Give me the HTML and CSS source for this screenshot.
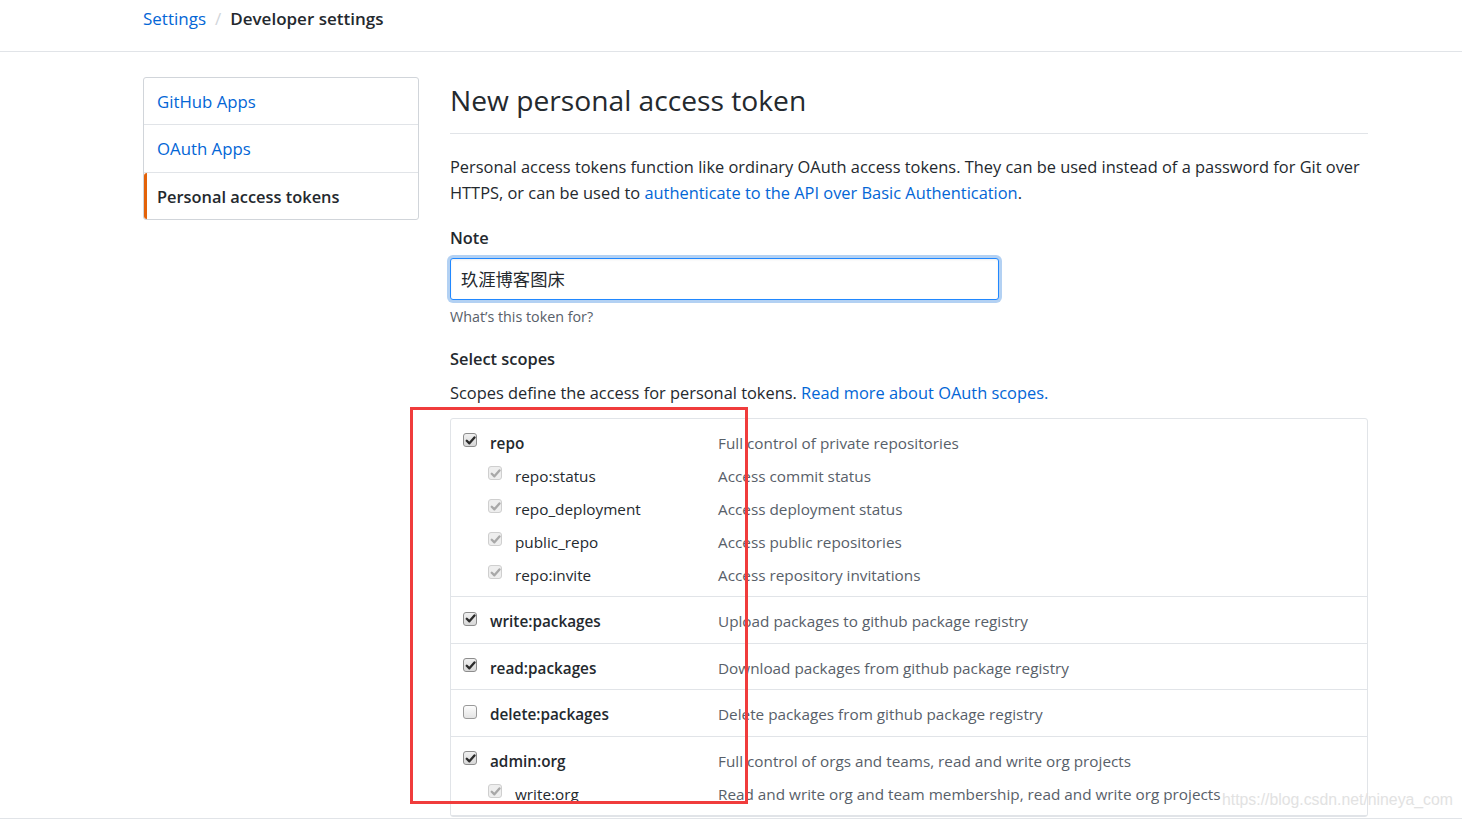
FILE: index.html
```html
<!DOCTYPE html>
<html lang="en">
<head>
<meta charset="utf-8">
<title>New personal access token</title>
<link rel="stylesheet" href="styles.css">
</head>
<body>
<div class="viewport">
  <header class="topbar">
    <div class="container">
      <nav class="crumbs">
        <a href="#" class="crumb-link">Settings</a>
        <span class="crumb-sep">/</span>
        <strong class="crumb-current">Developer settings</strong>
      </nav>
    </div>
  </header>

  <div class="container layout">
    <nav class="menu">
      <a href="#" class="menu-item">GitHub Apps</a>
      <a href="#" class="menu-item">OAuth Apps</a>
      <a href="#" class="menu-item selected">Personal access tokens</a>
    </nav>

    <main class="main">
      <h2 class="subhead">New personal access token</h2>
      <p class="intro">Personal access tokens function like ordinary OAuth access tokens. They can be used instead of a password for Git over HTTPS, or can be used to <a href="#">authenticate to the API over Basic Authentication</a>.</p>

      <div class="form-group">
        <label class="form-label">Note</label>
        <input class="form-input" type="text" value="玖涯博客图床">
        <p class="form-note">What’s this token for?</p>
      </div>

      <div class="form-group scopes-group">
        <h3 class="form-label">Select scopes</h3>
        <p class="scopes-intro">Scopes define the access for personal tokens. <a href="#">Read more about OAuth scopes.</a></p>

        <div class="scopes">
          <div class="scope-row">
            <div class="scope-item">
              <span class="scope-name top"><span class="cb checked"><svg viewBox="0 0 10 10"><path d="M1.6 5.2 L4 7.6 L8.6 2.2"/></svg></span>repo</span>
              <span class="scope-desc">Full control of private repositories</span>
            </div>
            <div class="scope-item child">
              <span class="scope-name"><span class="cb disabled"><svg viewBox="0 0 10 10"><path d="M1.6 5.2 L4 7.6 L8.6 2.2"/></svg></span>repo:status</span>
              <span class="scope-desc">Access commit status</span>
            </div>
            <div class="scope-item child">
              <span class="scope-name"><span class="cb disabled"><svg viewBox="0 0 10 10"><path d="M1.6 5.2 L4 7.6 L8.6 2.2"/></svg></span>repo_deployment</span>
              <span class="scope-desc">Access deployment status</span>
            </div>
            <div class="scope-item child">
              <span class="scope-name"><span class="cb disabled"><svg viewBox="0 0 10 10"><path d="M1.6 5.2 L4 7.6 L8.6 2.2"/></svg></span>public_repo</span>
              <span class="scope-desc">Access public repositories</span>
            </div>
            <div class="scope-item child">
              <span class="scope-name"><span class="cb disabled"><svg viewBox="0 0 10 10"><path d="M1.6 5.2 L4 7.6 L8.6 2.2"/></svg></span>repo:invite</span>
              <span class="scope-desc">Access repository invitations</span>
            </div>
          </div>

          <div class="scope-row">
            <div class="scope-item">
              <span class="scope-name top"><span class="cb checked"><svg viewBox="0 0 10 10"><path d="M1.6 5.2 L4 7.6 L8.6 2.2"/></svg></span>write:packages</span>
              <span class="scope-desc">Upload packages to github package registry</span>
            </div>
          </div>

          <div class="scope-row">
            <div class="scope-item">
              <span class="scope-name top"><span class="cb checked"><svg viewBox="0 0 10 10"><path d="M1.6 5.2 L4 7.6 L8.6 2.2"/></svg></span>read:packages</span>
              <span class="scope-desc">Download packages from github package registry</span>
            </div>
          </div>

          <div class="scope-row">
            <div class="scope-item">
              <span class="scope-name top"><span class="cb"></span>delete:packages</span>
              <span class="scope-desc">Delete packages from github package registry</span>
            </div>
          </div>

          <div class="scope-row last">
            <div class="scope-item">
              <span class="scope-name top"><span class="cb checked"><svg viewBox="0 0 10 10"><path d="M1.6 5.2 L4 7.6 L8.6 2.2"/></svg></span>admin:org</span>
              <span class="scope-desc">Full control of orgs and teams, read and write org projects</span>
            </div>
            <div class="scope-item child">
              <span class="scope-name"><span class="cb disabled"><svg viewBox="0 0 10 10"><path d="M1.6 5.2 L4 7.6 L8.6 2.2"/></svg></span>write:org</span>
              <span class="scope-desc">Read and write org and team membership, read and write org projects</span>
            </div>
          </div>
        </div>
      </div>
    </main>
  </div>

  <div class="annotation"></div>
  <div class="watermark">https://blog.csdn.net/nineya_com</div>
</div>
</body>
</html>
```

FILE: styles.css
```css
* { box-sizing: border-box; }

html, body {
  margin: 0;
  padding: 0;
  background: #fff;
}

body {
  font-family: "Open Sans", "Noto Sans", "Noto Sans CJK SC", sans-serif;
  font-size: 16.4px;
  line-height: 26.25px;
  color: #24292e;
}

a { color: #0366d6; text-decoration: none; }

.viewport {
  position: relative;
  height: 819px;
  overflow: hidden;
  border-bottom: 1px solid #e1e4e8;
}

.container {
  width: 1225px;
  margin-left: 143px;
}

/* header */
.topbar {
  height: 52px;
  border-bottom: 1px solid #e1e4e8;
}

.crumbs {
  display: flex;
  align-items: center;
  gap: 9px;
  height: 38px;
  font-size: 17px;
}

.crumb-sep { color: #d1d5da; }
.crumb-current { font-weight: 600; color: #24292e; }

/* layout */
.layout {
  display: flex;
  gap: 31px;
  padding-top: 25px;
}

.menu {
  flex: 0 0 276px;
  align-self: flex-start;
  display: flex;
  flex-direction: column;
  border: 1px solid #d1d5da;
  border-radius: 3px;
}

.menu-item {
  display: block;
  height: 47.3px;
  padding: 11px 13px 10px;
  font-size: 16.8px;
  line-height: 26px;
  border-bottom: 1px solid #e1e4e8;
}

.menu-item:last-child { border-bottom: 0; height: 46.4px; }

.menu-item.selected {
  color: #24292e;
  font-weight: 600;
  font-size: 16.4px;
  border-left: 3px solid #e36209;
  padding-left: 10px;
  border-radius: 3px 0 0 3px;
}

.main {
  flex: 0 0 918px;
}

.subhead {
  margin: 0 0 20px;
  padding: 1px 0 10px;
  font-size: 28.2px;
  line-height: 45px;
  font-weight: 400;
  border-bottom: 1px solid #e1e4e8;
}

.intro {
  margin: 0 0 18px;
}

.form-group { margin: 0 0 19px; }

.form-label {
  display: block;
  margin: 0 0 7px;
  font-size: 16.4px;
  line-height: 26px;
  font-weight: 600;
}

.form-input {
  display: block;
  width: 549px;
  height: 42px;
  padding: 0 10px;
  font-family: "Noto Sans CJK SC", "Open Sans", sans-serif;
  font-size: 17.3px;
  color: #24292e;
  border: 1px solid #2188ff;
  border-radius: 3px;
  box-shadow: inset 0 1px 2px rgba(27,31,35,.075), 0 0 0 3px rgba(3,102,214,.3);
  outline: none;
}

.form-note {
  margin: 7px 0 0;
  font-size: 14.3px;
  line-height: 20px;
  color: #586069;
}

.scopes-group h3 { margin-bottom: 8px; }

.scopes-intro { margin: 0 0 12px; }

.scopes {
  border: 1px solid #e1e4e8;
  border-radius: 3px;
}

.scope-row {
  padding: 13px 12px 10.5px 12px;
  border-bottom: 1px solid #e1e4e8;
}

.scope-item {
  display: grid;
  grid-template-columns: 255px 1fr;
  font-size: 15.3px;
  line-height: 22px;
}

.scope-item.child {
  margin-top: 11px;
  padding-left: 25px;
  grid-template-columns: 230px 1fr;
}

.scope-name {
  display: flex;
  align-items: center;
  gap: 13px;
  color: #24292e;
}

.scope-name.top { font-weight: 600; }

.scope-desc { color: #586069; }

/* checkboxes */
.cb {
  flex: 0 0 14px;
  width: 14px;
  height: 14px;
  margin-top: -5px;
  border: 1px solid #9a9a9a;
  border-radius: 3px;
  background: linear-gradient(#fdfdfd, #e4e4e4);
  display: flex;
  align-items: center;
  justify-content: center;
}

.cb svg {
  width: 11px;
  height: 11px;
  fill: none;
  stroke-width: 2.1;
  stroke-linecap: round;
  stroke-linejoin: round;
}

.cb.checked {
  background: linear-gradient(#f0f0f0, #d8d8d8);
  border-color: #8d8d8d;
}
.cb.checked svg { stroke: #2b2b2b; }

.cb.disabled {
  background: #eeeeee;
  border-color: #cfcfcf;
}
.cb.disabled svg { stroke: #a8a8a8; }

/* overlays */
.annotation {
  position: absolute;
  left: 410px;
  top: 407px;
  width: 338px;
  height: 397px;
  border: 3px solid #f03c3c;
}

.watermark {
  position: absolute;
  left: 1222px;
  top: 788px;
  font-family: "Liberation Sans", Arial, sans-serif;
  font-size: 15.8px;
  line-height: 24px;
  color: #e2e2e2;
}
```
